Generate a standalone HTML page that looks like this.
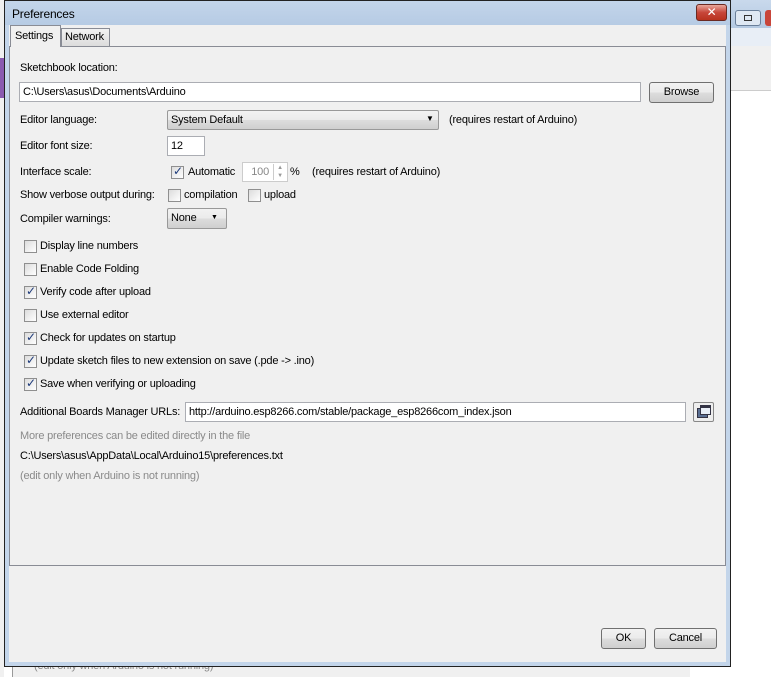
<!DOCTYPE html>
<html><head><meta charset="utf-8"><style>
*{margin:0;padding:0;box-sizing:border-box}
body{width:771px;height:677px;overflow:hidden;background:#fff;font-family:"Liberation Sans","DejaVu Sans",sans-serif;font-size:11px;letter-spacing:-0.2px;color:#000;position:relative}
.a{position:absolute;white-space:nowrap}
.inp{position:absolute;background:#fff;border:1px solid #abadb3;padding:2px 3px;height:20px;line-height:14px}
.btn{position:absolute;border:1px solid #707070;border-radius:3px;background:linear-gradient(#f2f2f2,#ebebeb 50%,#dddddd 51%,#cfcfcf);text-align:center;line-height:18px}
.cb{position:absolute;width:13px;height:13px;border:1px solid #8f8f8f;background:linear-gradient(135deg,#dcdcdc,#fff)}
.cb.c::after{content:"✓";position:absolute;left:1px;top:-3px;font-size:12px;color:#1d3a7a;font-weight:bold}
.gray{color:#8a8a8a}
</style></head><body>
<div class="a" style="left:731px;top:0;width:40px;height:28px;background:linear-gradient(#c9d9ec,#b4c9e2)"></div>
<div class="a" style="left:735px;top:10px;width:26px;height:16px;border:1px solid #6a7f9a;border-radius:3px;background:#dfe8f3"></div>
<div class="a" style="left:744px;top:15px;width:8px;height:6px;border:1px solid #333"></div>
<div class="a" style="left:765px;top:10px;width:8px;height:16px;background:#c8453a;border-radius:3px"></div>
<div class="a" style="left:731px;top:28px;width:40px;height:18px;background:#e8eef6"></div>
<div class="a" style="left:731px;top:46px;width:40px;height:45px;background:#f0f0f0;border-bottom:1px solid #ccc"></div>
<div class="a" style="left:0;top:0;width:4px;height:677px;background:#f0f0f0"></div>
<div class="a" style="left:0;top:58px;width:4px;height:40px;background:#8a5ab0"></div>
<div class="a" style="left:12px;top:666px;width:678px;height:11px;background:#f0f0f0;border-left:1px solid #999"></div>
<div class="a gray" style="left:34px;top:660px">(edit only when Arduino is not running)</div>
<!-- dialog -->
<div class="a" style="left:4px;top:0;width:727px;height:667px;border:1px solid #222;background:#f0f0f0"></div>
<div class="a" style="left:5px;top:1px;width:725px;height:24px;background:linear-gradient(#c3d5ea,#b6cbe4)"></div>
<div class="a" style="left:12px;top:7px;font-size:12px">Preferences</div>
<div class="a" style="left:696px;top:4px;width:31px;height:17px;border:1px solid #6b2a22;border-radius:3px;background:linear-gradient(#e9a89c,#c7463a 50%,#b8321f);color:#fff;font-weight:bold;text-align:center;line-height:15px;font-size:12px">✕</div>
<div class="a" style="left:5px;top:25px;width:4px;height:641px;background:#c3d5ea"></div>
<div class="a" style="left:726px;top:25px;width:4px;height:641px;background:#c3d5ea"></div>
<div class="a" style="left:5px;top:662px;width:725px;height:4px;background:#c3d5ea"></div>
<div class="a" style="left:9px;top:25px;width:717px;height:637px;background:#f0f0f0"></div>
<div class="a" style="left:9px;top:46px;width:717px;height:520px;border:1px solid #898c95;background:#f0f0f0"></div>
<div class="a" style="left:61px;top:28px;width:49px;height:19px;border:1px solid #898c95;background:linear-gradient(#f2f2f2,#dcdcdc)"></div>
<div class="a" style="left:65px;top:31px">Network</div>
<div class="a" style="left:10px;top:25px;width:51px;height:22px;border:1px solid #898c95;border-bottom:none;background:#f0f0f0"></div>
<div class="a" style="left:15px;top:30px">Settings</div>

<div class="a" style="left:20px;top:62px">Sketchbook location:</div>
<div class="inp" style="left:19px;top:82px;width:622px">C:\Users\asus\Documents\Arduino</div>
<div class="btn" style="left:649px;top:82px;width:65px;height:21px">Browse</div>

<div class="a" style="left:20px;top:114px">Editor language:</div>
<div class="btn" style="left:167px;top:110px;width:272px;height:20px;text-align:left;padding-left:3px;border-radius:2px;border-color:#999">System Default</div>
<div class="a" style="left:426px;top:114px;font-size:8px">▼</div>
<div class="a" style="left:449px;top:114px">(requires restart of Arduino)</div>

<div class="a" style="left:20px;top:140px">Editor font size:</div>
<div class="inp" style="left:167px;top:136px;width:38px">12</div>

<div class="a" style="left:20px;top:166px">Interface scale:</div>
<div class="cb c" style="left:171px;top:166px"></div>
<div class="a" style="left:188px;top:166px">Automatic</div>
<div class="inp" style="left:242px;top:162px;width:46px;color:#888;text-align:right;padding-right:18px;border-color:#ccc">100</div>
<div class="a" style="left:273px;top:164px;width:13px;height:16px;border-left:1px solid #ccc;font-size:6px;color:#999;line-height:8px;text-align:center">▲<br>▼</div>
<div class="a" style="left:290px;top:166px">%</div>
<div class="a" style="left:312px;top:166px">(requires restart of Arduino)</div>

<div class="a" style="left:20px;top:189px">Show verbose output during:</div>
<div class="cb" style="left:168px;top:189px"></div>
<div class="a" style="left:184px;top:189px">compilation</div>
<div class="cb" style="left:248px;top:189px"></div>
<div class="a" style="left:264px;top:189px">upload</div>

<div class="a" style="left:20px;top:213px">Compiler warnings:</div>
<div class="btn" style="left:167px;top:208px;width:60px;height:21px;text-align:left;padding-left:3px;border-radius:2px;border-color:#999">None</div>
<div class="a" style="left:211px;top:214px;font-size:7px">▼</div>

<div class="cb" style="left:24px;top:240px"></div><div class="a" style="left:40px;top:240px">Display line numbers</div>
<div class="cb" style="left:24px;top:263px"></div><div class="a" style="left:40px;top:263px">Enable Code Folding</div>
<div class="cb c" style="left:24px;top:286px"></div><div class="a" style="left:40px;top:286px">Verify code after upload</div>
<div class="cb" style="left:24px;top:309px"></div><div class="a" style="left:40px;top:309px">Use external editor</div>
<div class="cb c" style="left:24px;top:332px"></div><div class="a" style="left:40px;top:332px">Check for updates on startup</div>
<div class="cb c" style="left:24px;top:355px"></div><div class="a" style="left:40px;top:355px">Update sketch files to new extension on save (.pde -&gt; .ino)</div>
<div class="cb c" style="left:24px;top:378px"></div><div class="a" style="left:40px;top:378px">Save when verifying or uploading</div>

<div class="a" style="left:20px;top:406px">Additional Boards Manager URLs:</div>
<div class="inp" style="left:185px;top:402px;width:501px">http://arduino.esp8266.com/stable/package_esp8266com_index.json</div>
<div class="a" style="left:693px;top:402px;width:21px;height:20px;border:1px solid #888;border-radius:2px;background:#eee"></div>
<div class="a" style="left:697px;top:408px;width:11px;height:10px;border:1px solid #334;background:#5a6f92"></div>
<div class="a" style="left:700px;top:405px;width:11px;height:10px;border:1px solid #334;background:#e8eef6;border-top:3px solid #334"></div>

<div class="a gray" style="left:20px;top:430px">More preferences can be edited directly in the file</div>
<div class="a" style="left:20px;top:450px">C:\Users\asus\AppData\Local\Arduino15\preferences.txt</div>
<div class="a gray" style="left:20px;top:470px">(edit only when Arduino is not running)</div>

<div class="btn" style="left:601px;top:628px;width:45px;height:21px">OK</div>
<div class="btn" style="left:654px;top:628px;width:63px;height:21px">Cancel</div>
</body></html>
